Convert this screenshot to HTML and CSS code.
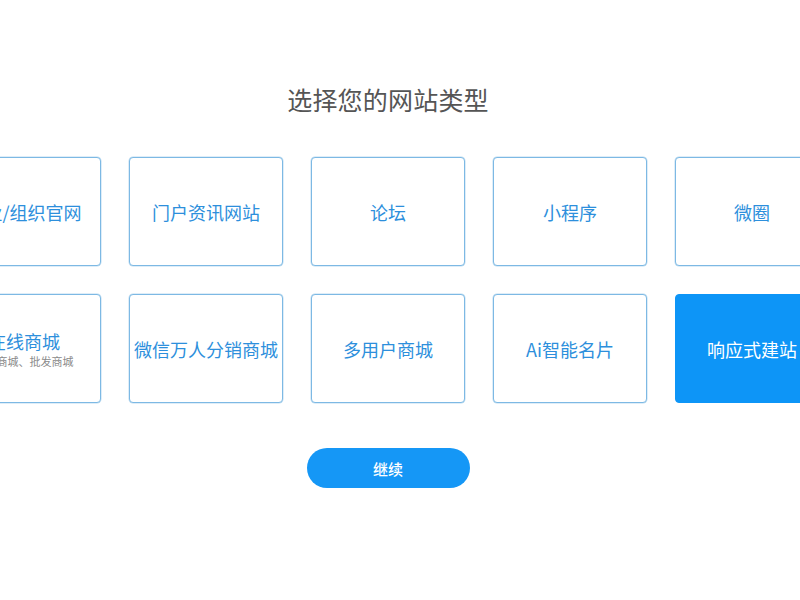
FILE: index.html
```html
<!DOCTYPE html>
<html lang="zh">
<head>
<meta charset="utf-8">
<title>选择您的网站类型</title>
<link rel="stylesheet" href="styles.css">
</head>
<body>
<main class="page">
  <h1 class="title">选择您的网站类型</h1>
  <div class="grid">
    <div class="card"><span class="name">企业/组织官网</span></div>
    <div class="card"><span class="name">门户资讯网站</span></div>
    <div class="card"><span class="name">论坛</span></div>
    <div class="card"><span class="name">小程序</span></div>
    <div class="card"><span class="name">微圈</span></div>
    <div class="card"><span class="name">在线商城</span><span class="sub">零售商城、批发商城</span></div>
    <div class="card"><span class="name">微信万人分销商城</span></div>
    <div class="card"><span class="name">多用户商城</span></div>
    <div class="card"><span class="name">Ai智能名片</span></div>
    <div class="card active"><span class="name">响应式建站</span></div>
  </div>
  <button class="next" type="button">继续</button>
</main>
</body>
</html>
```

FILE: styles.css
```css
html, body {
  margin: 0;
  padding: 0;
  background: #ffffff;
  overflow: hidden;
}
body {
  font-family: "Noto Sans CJK SC", "Noto Sans", sans-serif;
}
.page {
  width: 776px;
  display: flex;
  flex-direction: column;
  align-items: center;
}
.title {
  margin: 82px 0 0;
  font-size: 25px;
  line-height: 34px;
  font-weight: 400;
  color: #555555;
  letter-spacing: 0.2px;
}
.grid {
  margin-top: 41px;
  flex: none;
  display: grid;
  grid-template-columns: repeat(5, 154px);
  grid-auto-rows: 109px;
  column-gap: 28px;
  row-gap: 28px;
}
.card {
  box-sizing: border-box;
  border: 1px solid #7db9e4;
  border-radius: 4px;
  background: #ffffff;
  box-shadow: 0 0 0 0.5px rgba(125, 185, 228, 0.5);
  display: flex;
  flex-direction: column;
  align-items: center;
  justify-content: center;
  white-space: nowrap;
}
.name {
  font-size: 18px;
  line-height: 22px;
  color: #2d8fdc;
}
.sub {
  margin-top: 2px;
  font-size: 11px;
  line-height: 14px;
  color: #8a8a8a;
}
.card.active {
  background: #0d95f7;
  border-color: #0d95f7;
  box-shadow: none;
}
.card.active .name {
  color: #ffffff;
}
.next {
  margin-top: 45px;
  width: 163px;
  height: 40px;
  border: none;
  border-radius: 20px;
  background: #1597f6;
  color: #ffffff;
  font-family: "Noto Sans CJK SC", "Noto Sans", sans-serif;
  font-size: 15px;
  font-weight: 500;
  cursor: pointer;
}
```
